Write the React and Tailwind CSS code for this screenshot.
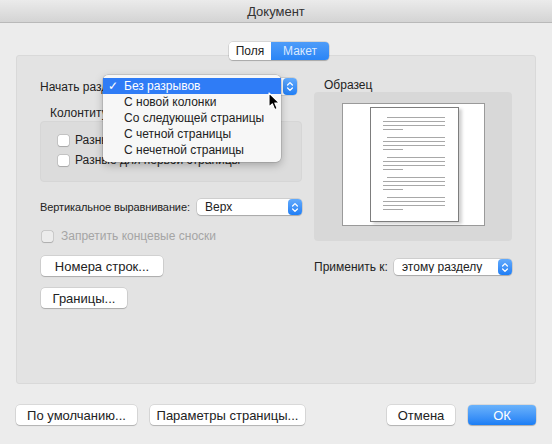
import React from "react";

function Stepper() {
  return (
    <div className="flex w-[14px] shrink-0 items-center justify-center self-stretch rounded-[4px] bg-linear-to-b from-[#62aafb] to-[#1e7ef5]">
      <svg width="8" height="11" viewBox="0 0 8 11" fill="none" stroke="white" strokeWidth="1.3" strokeLinecap="round" strokeLinejoin="round">
        <path d="M1.6 4 L4 1.6 L6.4 4" />
        <path d="M1.6 7 L4 9.4 L6.4 7" />
      </svg>
    </div>
  );
}

function Popup({ w, label }) {
  return (
    <div
      className={`flex h-[16px] items-center rounded-[4px] bg-white shadow-[0_0_0_0.5px_rgba(0,0,0,0.18),0_1px_1px_rgba(0,0,0,0.18)] ${w}`}
    >
      <span className="flex-1 truncate pl-[8px] text-[12px] leading-none text-[#222]">{label}</span>
      <Stepper />
    </div>
  );
}

function Btn({ w, children, className = "" }) {
  return (
    <div
      className={`flex h-[20px] items-center justify-center rounded-[4px] bg-white text-[13px] leading-none text-[#222] shadow-[0_0_0_0.5px_rgba(0,0,0,0.16),0_1px_1px_rgba(0,0,0,0.18)] ${w} ${className}`}
    >
      {children}
    </div>
  );
}

function Check({ disabled }) {
  return (
    <div
      className={`h-[11px] w-[11px] shrink-0 rounded-[2px] shadow-[0_0_0_0.5px_rgba(0,0,0,0.2),0_0.5px_1px_rgba(0,0,0,0.15)] ${
        disabled ? "bg-[#ececec]" : "bg-white"
      }`}
    />
  );
}

function DocLines() {
  const groups = [0, 1, 2, 3, 4];
  return (
    <div className="flex flex-col gap-[7px] pt-[9px] pl-[12px]">
      {groups.map((g) => (
        <div key={g} className="flex flex-col gap-[3px]">
          <div className="ml-[4px] h-px w-[58px] bg-[#a8a8a8]" />
          <div className="h-px w-[62px] bg-[#a8a8a8]" />
          <div className="h-px w-[62px] bg-[#a8a8a8]" />
          <div className="h-px w-[20px] bg-[#a8a8a8]" />
        </div>
      ))}
    </div>
  );
}

export default function App() {
  const menuItems = [
    "Без разрывов",
    "С новой колонки",
    "Со следующей страницы",
    "С четной страницы",
    "С нечетной страницы",
  ];
  return (
    <div className="flex h-[444px] w-[552px] flex-col overflow-hidden bg-[#ececec] font-['Liberation_Sans',Arial,sans-serif] text-[#222]">
      {/* Title bar */}
      <div className="flex h-[23px] shrink-0 items-center justify-center border-b border-[#b9b9b9] bg-linear-to-b from-[#ebebeb] to-[#d4d4d4]">
        <span className="text-[13px] leading-none text-[#333]">Документ</span>
      </div>

      <div className="flex flex-1 flex-col px-[16px] pt-[32px]">
        {/* Panel */}
        <div className="relative flex h-[329px] w-[520px] gap-[12px] rounded-[3px] border border-[#d9d9d9] bg-[#e3e3e3] pl-[23px] pt-[22px]">
          {/* Segmented control */}
          <div className="absolute left-[212px] top-[-14px] flex h-[18px] overflow-hidden rounded-[4px] shadow-[0_0_0_0.5px_rgba(0,0,0,0.18),0_1px_1px_rgba(0,0,0,0.18)]">
            <div className="flex w-[42px] items-center justify-center bg-white text-[12px] leading-none text-[#222]">
              Поля
            </div>
            <div className="flex w-[58px] items-center justify-center bg-linear-to-b from-[#4d9cf9] to-[#2a85f6] text-[12px] leading-none text-[#dbeaff]">
              Макет
            </div>
          </div>

          {/* Left column */}
          <div className="flex w-[262px] flex-col">
            <div className="flex h-[17px] items-center">
              <span className="w-[82px] whitespace-nowrap text-[12px] leading-none">Начать раздел:</span>
              <div className="mr-[5px] flex h-[17px] flex-1 items-center rounded-[4px] bg-white pl-[8px] text-[12px] shadow-[0_0_0_0.5px_rgba(0,0,0,0.18)]">
                <span className="flex-1" />
                <Stepper />
              </div>
            </div>
            <div className="ml-[10px] mt-[11px] h-[14px] whitespace-nowrap text-[12px] leading-[14px]">Колонтитулы</div>
            <div className="mt-px flex h-[61px] flex-col gap-[6px] overflow-hidden rounded-[4px] border border-[#d6d6d6] bg-[#dcdcdc] pl-[17px] pt-[11px]">
              <div className="flex h-[14px] items-center gap-[6px] whitespace-nowrap text-[12px] leading-none">
                <Check />
                <span>Разные для четных и нечетных</span>
              </div>
              <div className="flex h-[14px] items-center gap-[6px] whitespace-nowrap text-[12px] leading-none">
                <Check />
                <span>Разные для первой страницы</span>
              </div>
            </div>
            <div className="mt-[17px] flex h-[16px] items-center">
              <span className="w-[157px] whitespace-nowrap text-[11px] leading-none tracking-[-0.1px]">Вертикальное выравнивание:</span>
              <Popup w="w-[105px]" label="Верх" />
            </div>
            <div className="mt-[14px] flex h-[14px] items-center gap-[8px] pl-[2px] text-[12px] leading-none text-[#a5a5a5]">
              <Check disabled />
              <span>Запретить концевые сноски</span>
            </div>
            <Btn w="w-[122px]" className="ml-px mt-[13px]">Номера строк...</Btn>
            <Btn w="w-[86px]" className="ml-px mt-[12px]">Границы...</Btn>
          </div>

          {/* Right column */}
          <div className="flex w-[198px] flex-col">
            <div className="ml-[10px] h-[14px] text-[12px] leading-[14px]">Образец</div>
            <div className="flex h-[149px] justify-center rounded-[4px] bg-[#d8d8d8] pt-[11px]">
              <div className="h-[123px] w-[143px] border border-[#9a9a9a] bg-white pl-[27px] pt-[3px]">
                <div className="h-[115px] w-[89px] border border-[#7d7d7d] bg-white shadow-[3px_2px_3px_rgba(0,0,0,0.18)]">
                  <DocLines />
                </div>
              </div>
            </div>
            <div className="mt-[18px] flex h-[16px] items-center">
              <span className="w-[80px] whitespace-nowrap text-[12px] leading-none">Применить к:</span>
              <Popup w="w-[118px]" label="этому разделу" />
            </div>
          </div>

          {/* Open menu */}
          <div className="absolute left-[86px] top-[19px] z-10 flex h-[87px] w-[178px] flex-col rounded-[5px] bg-[#f7f7f7] pt-[3px] shadow-[0_0_0_0.5px_rgba(0,0,0,0.2),0_3px_8px_rgba(0,0,0,0.25)]">
            {menuItems.map((t, i) => (
              <div
                key={t}
                className={`relative flex h-[16px] items-center whitespace-nowrap pl-[21px] text-[12px] leading-none ${
                  i === 0 ? "bg-[#2f7cf6] text-white" : "text-[#222]"
                }`}
              >
                {i === 0 && <span className="absolute left-[5px] top-[1px] text-[12px] leading-[14px]">✓</span>}
                {t}
              </div>
            ))}
          </div>

          {/* Cursor */}
          <svg className="absolute left-[251px] top-[36px] z-20" width="13" height="19" viewBox="0 0 13 19">
            <path d="M1 1 L1 15 L4.3 11.8 L6.8 17.6 L9.2 16.6 L6.8 11 L11.4 11 Z" fill="black" stroke="white" strokeWidth="1.1" strokeLinejoin="round" />
          </svg>
        </div>

        {/* Bottom buttons */}
        <div className="mt-[21px] flex h-[20px] items-center">
          <Btn w="w-[121px]">По умолчанию...</Btn>
          <Btn w="w-[155px]" className="ml-[13px]">Параметры страницы...</Btn>
          <div className="flex-1" />
          <Btn w="w-[68px]">Отмена</Btn>
          <div className="ml-[13px] flex h-[20px] w-[68px] items-center justify-center rounded-[4px] bg-linear-to-b from-[#6ab2fb] to-[#1a7ef5] text-[13px] leading-none text-white shadow-[0_0_0_0.5px_rgba(0,0,0,0.15),0_1px_1px_rgba(0,0,0,0.2)]">
            ОК
          </div>
        </div>
      </div>
    </div>
  );
}
